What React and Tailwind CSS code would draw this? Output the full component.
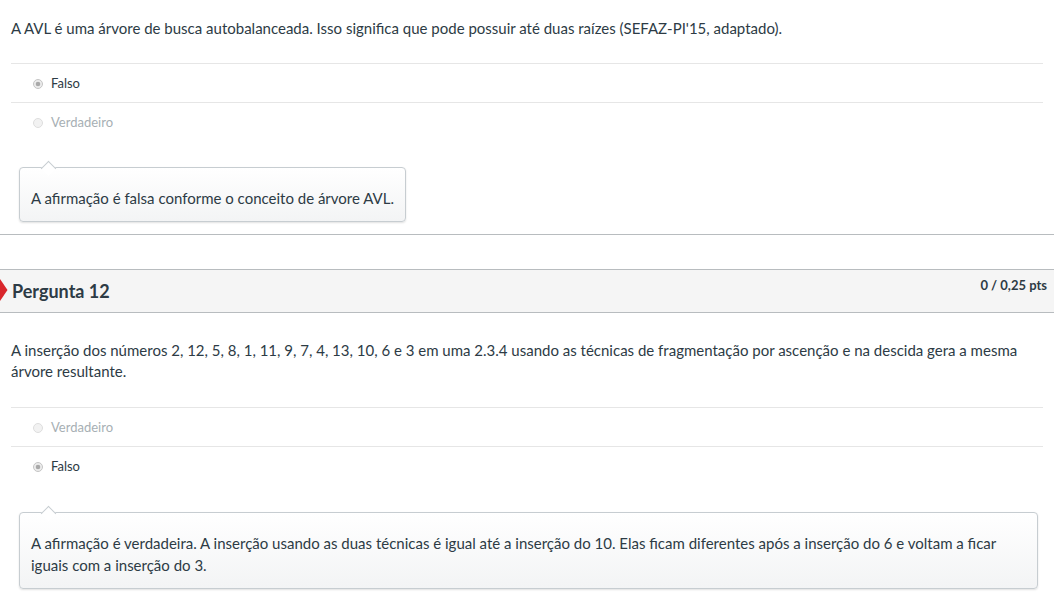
import React from 'react';

const TEXT = 'text-[#2d3b45]';

function Radio({ checked }) {
  return (
    <svg width="10" height="10" viewBox="0 0 10 10" className="shrink-0">
      <circle cx="5" cy="5" r="4.5" fill={checked ? '#ececec' : '#f2f2f2'} stroke={checked ? '#c4c4c4' : '#dddddd'} strokeWidth="1" />
      {checked && <circle cx="5" cy="5" r="2.3" fill="#a9a9a9" />}
    </svg>
  );
}

function Answers({ items, top }) {
  return (
    <div className={top}>
      {items.map(a => (
        <div key={a.label} className="flex items-center h-[39px] border-t border-[#e6e6e6] pl-[22px] gap-[8px] pt-[1px]">
          <Radio checked={a.checked} />
          <span className={a.checked ? `text-[13px] ${TEXT}` : 'text-[13px] text-[#a7afb4]'}>{a.label}</span>
        </div>
      ))}
    </div>
  );
}

function Comment({ children, top }) {
  return (
    <div className={`pl-[8px] ${top}`}>
      <div className="relative inline-block max-w-[1019px] border border-[#c7cdd1] rounded-[4px] bg-gradient-to-b from-white to-[#f3f4f5] shadow-[0_1px_2px_rgba(0,0,0,0.12)] pt-[19px] pb-[12px] px-[11px] text-[15px] leading-[22px] text-[#2d3b45]">
        <div className="absolute -top-[5px] left-[23px] w-[11px] h-[11px] rotate-45 bg-white border-t border-l border-[#c7cdd1]" />
        {children}
      </div>
    </div>
  );
}

export default function App() {
  return (
    <div className="bg-white min-h-screen" style={{ fontFamily: 'Lato, "Open Sans", sans-serif' }}>
      <div className="border-b border-[#b8bcbf] pb-[12px]">
        <div className="px-[11px]">
          <p className={`pt-[18px] text-[15px] leading-[21px] ${TEXT}`}>
            A AVL é uma árvore de busca autobalanceada. Isso significa que pode possuir até duas raízes (SEFAZ-PI'15, adaptado).
          </p>
          <Answers top="mt-[24px]" items={[{ label: 'Falso', checked: true }, { label: 'Verdadeiro', checked: false }]} />
          <Comment top="mt-[26px]">A afirmação é falsa conforme o conceito de árvore AVL.</Comment>
        </div>
      </div>

      <div className="mt-[34px]">
        <div className="relative flex items-start justify-between h-[44px] bg-[#f5f5f5] border-t border-b border-[#b8bcbf] pl-[12px] pr-[7px]">
          <svg width="8" height="22" viewBox="0 0 8 22" className="absolute left-0 top-[9px]">
            <polygon points="0,0 7.5,11 0,22" fill="#d9262b" />
          </svg>
          <h2 className={`text-[18px] font-bold leading-[22px] mt-[10px] ${TEXT}`}>Pergunta 12</h2>
          <span className={`text-[13px] font-bold leading-[16px] mt-[7px] ${TEXT}`}>0 / 0,25 pts</span>
        </div>
        <div className="px-[11px]">
          <p className={`pt-[27px] text-[15px] leading-[21px] ${TEXT}`}>
            A inserção dos números 2, 12, 5, 8, 1, 11, 9, 7, 4, 13, 10, 6 e 3 em uma 2.3.4 usando as técnicas de fragmentação por ascenção e na descida gera a mesma árvore resultante.
          </p>
          <Answers top="mt-[25px]" items={[{ label: 'Verdadeiro', checked: false }, { label: 'Falso', checked: true }]} />
          <Comment top="mt-[27px]">
            A afirmação é verdadeira. A inserção usando as duas técnicas é igual até a inserção do 10. Elas ficam diferentes após a inserção do 6 e voltam a ficar iguais com a inserção do 3.
          </Comment>
        </div>
      </div>
    </div>
  );
}
